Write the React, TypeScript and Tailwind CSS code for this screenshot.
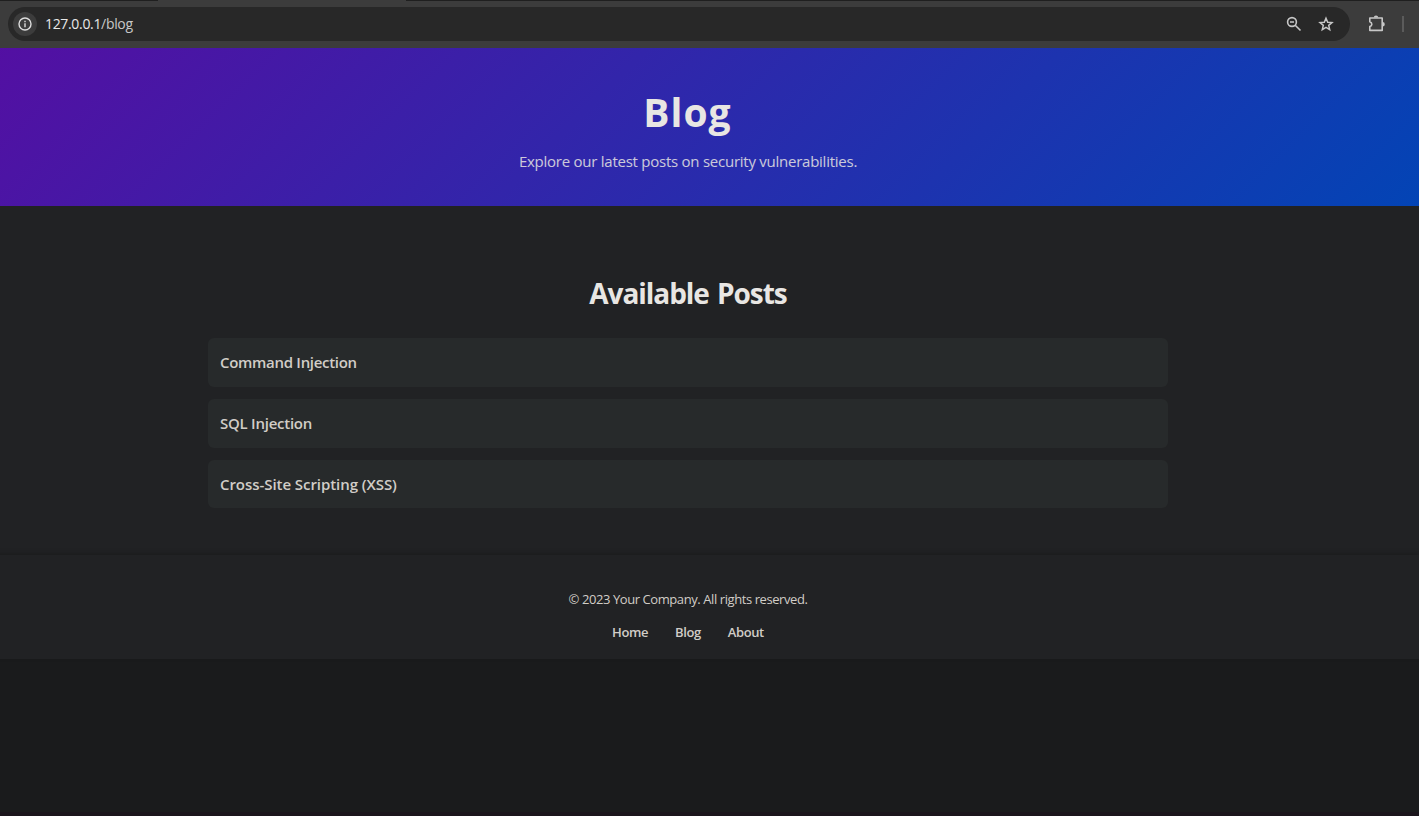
const posts = [
  { title: 'Command Injection', tracking: 'tracking-[-0.3px]' },
  { title: 'SQL Injection', tracking: 'tracking-[-0.25px]' },
  { title: 'Cross-Site Scripting (XSS)', tracking: 'tracking-[-0.06px]' },
];

function BrowserBar() {
  return (
    <div className="h-12 shrink-0 bg-[#3c3c3c] flex flex-col">
      <div className="h-px flex">
        <div className="w-[158px] bg-[#1f1f1f]" />
        <div className="w-[248px] bg-[#3c3c3c]" />
        <div className="flex-1 bg-[#1f1f1f]" />
      </div>
      <div className="mt-1.5 ml-2 flex items-center text-[#c7c7c7]">
        <div className="w-[1342px] h-[34px] rounded-full bg-[#282828] flex items-center pl-[5px] pr-4">
          <div className="size-6 rounded-full bg-[#3c3c3c] flex items-center justify-center">
            <svg className="size-[14px]" viewBox="0 0 14 14" fill="none" stroke="#dcdcdc" strokeWidth="1.4">
              <circle cx="7" cy="7" r="6" />
              <path d="M7 6.3v3.9M7 3.7v1.5" />
            </svg>
          </div>
          <div className="ml-2 text-[14px] leading-5 tracking-[-0.33px] text-[#e8e8e8]">
            <span>127.0.0.1</span>
            <span className="text-[#c7c7c7]">/blog</span>
          </div>
          <svg className="ml-auto size-4" viewBox="0 0 16 16" fill="none" stroke="currentColor" strokeWidth="1.6">
            <circle cx="6" cy="6" r="4.4" />
            <path d="M9.2 9.2l5.3 5.3M4 6h4" />
          </svg>
          <svg className="ml-4 size-4" viewBox="0 0 16 16" fill="none" stroke="currentColor" strokeWidth="1.5">
            <path d="M8 2.2l1.7 4 4.3.4-3.3 2.8 1 4.3L8 11.4l-3.7 2.3 1-4.3L2 6.6l4.3-.4z" />
          </svg>
        </div>
        <svg className="ml-[18px] size-[18px]" viewBox="0 0 18 18" fill="none" stroke="currentColor" strokeWidth="1.6" strokeLinejoin="round">
          <path d="M1.8 3h12.4v12.4H1.8v-3.8c2.7-.9 2.7-3.9 0-4.8z" />
          <path d="M5.8 2.6a2.2 2.2 0 0 1 4.4 0zM14.6 7a2.2 2.2 0 0 1 0 4.4z" fill="currentColor" stroke="none" />
        </svg>
        <div className="ml-4 w-0.5 h-4 bg-[#5b5b5b]" />
      </div>
    </div>
  );
}

export default function App() {
  return (
    <div className="h-[816px] w-[1419px] overflow-hidden flex flex-col bg-[#1a1b1c] font-['Open_Sans','Noto_Sans',sans-serif]">
      <BrowserBar />
      <div className="-ml-[43px] w-[1462px] flex-1 flex flex-col text-[#e8e6e3]">
        <header className="h-[158px] pl-[43px] bg-[linear-gradient(135deg,#550ea2,#0344b5)]">
          <div className="w-[1376px] pt-[35px] flex flex-col items-center">
            <h1 className="-ml-px text-[39px] leading-[58px] font-bold tracking-[1px]">Blog</h1>
            <p className="mt-2 text-[15px] leading-6 tracking-[-0.25px] opacity-85">
              Explore our latest posts on security vulnerabilities.
            </p>
          </div>
        </header>
        <main className="h-[349px] pl-[43px] bg-[#212224]">
          <div className="w-[1376px] pt-[66px] flex flex-col items-center">
            <h2 className="text-[28px] leading-[42px] font-bold tracking-[-1.05px] [word-spacing:2px]">Available Posts</h2>
            <ul className="mt-6 w-[960px] flex flex-col gap-3">
              {posts.map(({ title, tracking }) => (
                <li key={title} className="h-[49px] last:h-12 rounded-md bg-[#272a2b] px-3 flex items-center text-[15px] font-semibold text-[#d1cdc7]">
                  <span className={tracking}>{title}</span>
                </li>
              ))}
            </ul>
          </div>
        </main>
        <footer className="h-[104px] pl-[43px] bg-[#212224] shadow-[0_-2px_5px_rgba(0,0,0,0.2)]">
          <div className="w-[1376px] pt-[34px] flex flex-col items-center text-[13px] leading-5 text-[#d1cdc7]">
            <p className="tracking-[-0.42px]">© 2023 Your Company. All rights reserved.</p>
            <nav className="mt-[13px] flex gap-[27px] font-semibold tracking-[-0.4px]">
              <a>Home</a>
              <a>Blog</a>
              <a>About</a>
            </nav>
          </div>
        </footer>
      </div>
      <div className="h-1 bg-[#1b151c]" />
    </div>
  );
}
